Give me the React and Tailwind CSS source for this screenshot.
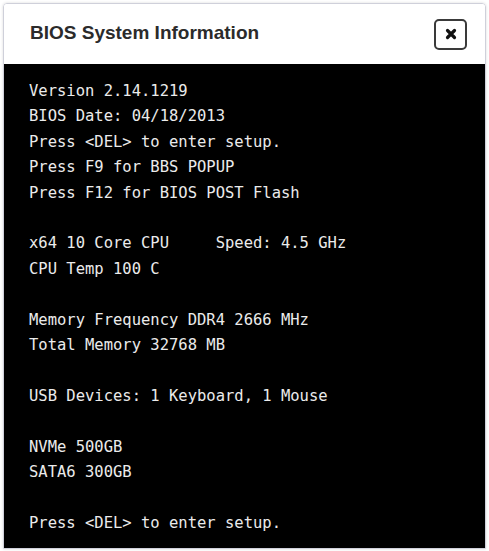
import React from 'react';

const lines = [
  'Version 2.14.1219',
  'BIOS Date: 04/18/2013',
  'Press <DEL> to enter setup.',
  'Press F9 for BBS POPUP',
  'Press F12 for BIOS POST Flash',
  '',
  'x64 10 Core CPU     Speed: 4.5 GHz',
  'CPU Temp 100 C',
  '',
  'Memory Frequency DDR4 2666 MHz',
  'Total Memory 32768 MB',
  '',
  'USB Devices: 1 Keyboard, 1 Mouse',
  '',
  'NVMe 500GB',
  'SATA6 300GB',
  '',
  'Press <DEL> to enter setup.',
];

export default function App() {
  return (
    <div className="w-[489px] h-[551px] bg-white p-[3px]">
      <div className="flex flex-col h-[546px] rounded-t-[4px] border border-[#cfd0da] shadow-[0_0_3px_rgba(0,0,0,0.15)] overflow-hidden">
        {/* Header */}
        <div className="flex items-center justify-between h-[60px] shrink-0 bg-white pl-[26px] pr-[18px]">
          <h1 className="text-[19px] font-bold text-[#2b2b2b] font-['Liberation_Sans',Arial,sans-serif] -mt-[1px]">
            BIOS System Information
          </h1>
          <button className="flex items-center justify-center w-[33px] h-[31px] rounded-[5px] border-2 border-[#3a3a3a] bg-white">
            <svg width="12" height="12" viewBox="0 0 12 12">
              <path d="M2.5 2.5 L9.5 9.5 M9.5 2.5 L2.5 9.5" stroke="#111" strokeWidth="3.2" strokeLinecap="round" />
            </svg>
          </button>
        </div>

        {/* Console */}
        <div className="flex-1 bg-black pl-[25px] pt-[15px] text-[15.5px] leading-[25.4px] text-[#ebebeb] font-['DejaVu_Sans_Mono','Liberation_Mono',monospace] whitespace-pre">
          {lines.map((l, i) => (
            <div key={i}>{l || '\u00a0'}</div>
          ))}
        </div>
      </div>
    </div>
  );
}
